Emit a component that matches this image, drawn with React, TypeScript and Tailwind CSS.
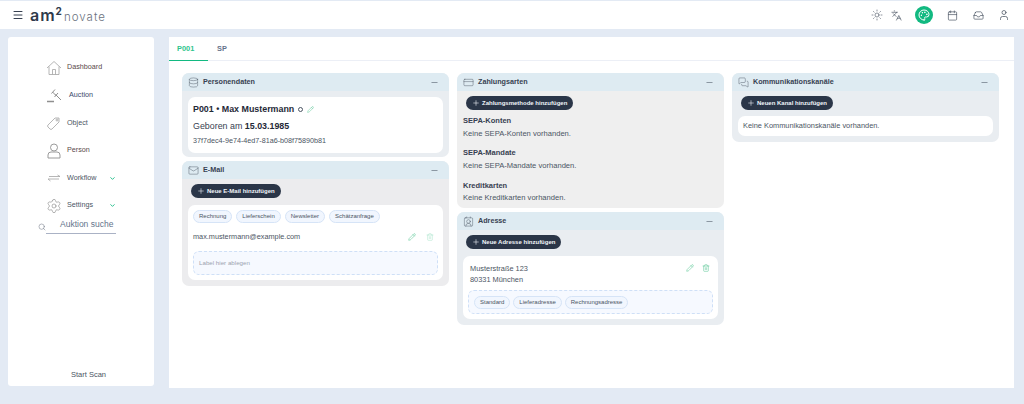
import {
  Calendar,
  ChevronDown,
  ContactRound,
  CreditCard,
  Database,
  Inbox,
  Languages,
  Mail,
  Menu,
  MessagesSquare,
  Minus,
  Palette,
  Pencil,
  Plus,
  Search,
  Settings,
  Sun,
  Trash2,
  User,
} from "lucide-react";
import type { ReactNode } from "react";

function HomeIcon() {
  return (
    <svg viewBox="0 0 16 16" className="h-[16px] w-[16px] text-[#a3a3a3]" fill="none" stroke="currentColor" strokeWidth="0.8">
      <path d="M1 8 8 1.5 15 8M3 6.5V14.5H13V6.5M6.5 14.5V9.5H9.5V14.5" />
    </svg>
  );
}

function GavelIcon() {
  return (
    <svg viewBox="0 0 16 16" className="h-[16px] w-[16px] text-[#8f8f8f]" fill="none" stroke="currentColor" strokeWidth="1">
      <path d="M5.5 6.5 9 2.5M8.5 10 12 6M6.5 5 10.5 9M9.5 7.5 15 13" />
      <path d="M1 14.5H8" strokeWidth="1.5" />
    </svg>
  );
}

function TagIcon() {
  return (
    <svg viewBox="0 0 16 16" className="h-[16px] w-[16px] text-[#a3a3a3]" fill="none" stroke="currentColor" strokeWidth="0.8">
      <path d="M2 10 9 3 H13 V7 L6 14 Q5 15 4 14 L2 12 Q1 11 2 10Z" />
      <circle cx="11" cy="5" r="1" />
    </svg>
  );
}

function PersonIcon() {
  return (
    <svg viewBox="0 0 16 16" className="h-[16px] w-[16px] text-[#8f8f8f]" fill="none" stroke="currentColor" strokeWidth="0.9">
      <circle cx="8" cy="4.5" r="3.5" />
      <path d="M2 15V12Q2 9 5 9H11Q14 9 14 12V15Z" />
    </svg>
  );
}

function WorkflowIcon() {
  return (
    <svg viewBox="0 0 16 16" className="h-[16px] w-[16px] text-[#a3a3a3]" fill="none" stroke="currentColor" strokeWidth="0.8">
      <path d="M3 6.5H14L11.5 5M13 9H2L4.5 11" />
    </svg>
  );
}

function GearIcon() {
  return <Settings className="h-[16px] w-[16px] text-[#8f8f8f]" strokeWidth={1} />;
}

const navItems = [
  { label: "Dashboard", icon: HomeIcon, color: "text-[#5b4a4a]", chevron: false, shift: "" },
  { label: "Auction", icon: GavelIcon, color: "text-[#3b4a6b]", chevron: false, shift: "ml-[2px]" },
  { label: "Object", icon: TagIcon, color: "text-[#4b5563]", chevron: false, shift: "" },
  { label: "Person", icon: PersonIcon, color: "text-[#5b4a4a]", chevron: false, shift: "" },
  { label: "Workflow", icon: WorkflowIcon, color: "text-[#4b5563]", chevron: true, shift: "" },
  { label: "Settings", icon: GearIcon, color: "text-[#4b5563]", chevron: true, shift: "" },
];

function Chip({ label }: { label: string }) {
  return (
    <span className="flex h-[13px] items-center rounded-full border border-[#d6e4f7] bg-[#f1f6fe] px-[5px] text-[6px] text-[#4b5563]">
      {label}
    </span>
  );
}

function AddButton({ label }: { label: string }) {
  return (
    <button className="flex h-[14px] w-fit items-center rounded-full bg-[#2b3648] pl-[6px] pr-[6px] text-[6px] font-semibold text-[#f1f5f9]">
      <Plus className="mr-[2px] h-[8px] w-[8px]" strokeWidth={1.75} />
      {label}
    </button>
  );
}

function Panel({
  title,
  icon,
  bg,
  children,
}: {
  title: string;
  icon: ReactNode;
  bg: string;
  children: ReactNode;
}) {
  return (
    <section className={`overflow-hidden rounded-[7px] ${bg}`}>
      <div className="flex h-[18px] items-center bg-[#deebf2] pl-[6px] pr-[10px]">
        <span className="mr-[4px] text-[#4b5563]">{icon}</span>
        <span className="text-[7.2px] font-bold text-[#374151]">{title}</span>
        <Minus className="ml-auto h-[9px] w-[9px] text-[#4b5563]" strokeWidth={1.5} />
      </div>
      {children}
    </section>
  );
}

export default function App() {
  return (
    <div className="flex h-[404px] w-[1024px] flex-col overflow-hidden bg-[#e3eaf4] font-['Liberation_Sans',Arial,sans-serif]">
      <header className="mt-px flex h-[28px] items-center bg-white pl-[12px] pr-[14px]">
        <Menu className="h-[12px] w-[12px] text-[#374151]" strokeWidth={2} />
        <div className="ml-[6px] flex items-baseline font-['Inter',sans-serif] text-[#2f3a4a]">
          <span className="text-[16px] font-semibold leading-none tracking-[1px]">am</span>
          <span className="relative -top-[6px] text-[10px] font-bold leading-none">2</span>
          <span className="ml-[2px] text-[11.5px] font-light leading-none tracking-[1px] text-[#6b7280]">novate</span>
        </div>
        <div className="ml-auto flex items-center text-[#4b5563]">
          <Sun className="h-[12px] w-[12px]" strokeWidth={1.25} />
          <Languages className="ml-[8px] h-[11px] w-[11px]" strokeWidth={1.5} />
          <span className="ml-[13px] flex h-[18px] w-[18px] items-center justify-center rounded-full bg-[#12b981] text-white">
            <Palette className="h-[12px] w-[12px]" strokeWidth={2} />
          </span>
          <Calendar className="ml-[14px] h-[11px] w-[11px]" strokeWidth={1.5} />
          <Inbox className="ml-[15px] h-[11px] w-[11px]" strokeWidth={1.5} />
          <User className="ml-[14px] h-[12px] w-[12px]" strokeWidth={1.5} />
        </div>
      </header>

      <div className="mt-[8px] flex items-start">
        <aside className="ml-[8px] flex h-[349px] w-[146px] flex-col rounded-[3px] bg-white">
          <nav className="mt-[17px] flex flex-col">
            {navItems.map((item) => (
              <div key={item.label} className="flex h-[27.6px] items-center pl-[38px]">
                <item.icon />
                <span className={`ml-[5px] w-[43px] text-[7.2px] ${item.color}`}>
                  <span className={item.shift}>{item.label}</span>
                </span>
                {item.chevron && <ChevronDown className="-ml-[1px] h-[7px] w-[7px] text-[#12b981]" strokeWidth={3} />}
              </div>
            ))}
          </nav>
          <div className="ml-[30px] mt-[-1px] flex items-end">
            <Search className="mb-[3px] h-[8px] w-[8px] text-[#6b7280]" strokeWidth={1.5} />
            <div className="h-[15px] w-[70px] border-b border-[#aab2c5] pl-[14px] text-[8.5px] leading-[10px] text-[#64748b]">
              Auktion suche
            </div>
          </div>
          <div className="mt-auto mb-[6px] ml-[63px] text-[7.5px] text-[#4b5563]">Start Scan</div>
        </aside>

        <main className="ml-[15px] h-[351px] w-[845px] bg-white">
          <div className="flex h-[24px] border-b border-[#eceff6] text-[7.4px] font-bold">
            <div className="flex h-[24px] w-[39px] items-center border-b border-[#12b981] pl-[8px] pt-[1px] text-[#2fc48d]">P001</div>
            <div className="flex items-center pl-[9px] pt-[1px] text-[#64748b]">SP</div>
          </div>

          <div className="ml-[13px] mt-[12px] flex items-start gap-[8px]">
            <div className="flex w-[267px] flex-col gap-[4px]">
              <Panel title="Personendaten" bg="bg-[#e9edf1]" icon={<Database className="h-[11px] w-[11px]" strokeWidth={1} />}>
                <div className="p-[6px] pb-[4px]">
                  <div className="h-[56px] rounded-[7px] bg-white px-[5px] pt-[6px]">
                    <div className="flex items-center text-[8.9px] font-bold text-[#1f2937]">
                      P001 • Max Mustermann
                      <span className="ml-[4px] h-[5px] w-[5px] rounded-full border border-[#4b5563]" />
                      <Pencil className="ml-[4px] h-[7px] w-[7px] text-[#4fc28f]" strokeWidth={1.5} />
                    </div>
                    <div className="mt-[5px] text-[8.9px] leading-[11px] text-[#374151]">
                      Geboren am <span className="font-bold text-[#1f2937]">15.03.1985</span>
                    </div>
                    <div className="mt-[4px] text-[7.2px] leading-[9px] text-[#4b5563]">37f7dec4-9e74-4ed7-81a6-b08f75890b81</div>
                  </div>
                </div>
              </Panel>

              <Panel title="E-Mail" bg="bg-[#ececee]" icon={<Mail className="h-[11px] w-[11px]" strokeWidth={1} />}>
                <div className="px-[6px] pb-[6px] pt-[5px]">
                  <div className="ml-[3px]">
                    <AddButton label="Neue E-Mail hinzufügen" />
                  </div>
                  <div className="mt-[7px] h-[75px] rounded-[7px] bg-white px-[5px] pt-[5px]">
                    <div className="flex gap-[4px]">
                      {["Rechnung", "Lieferschein", "Newsletter", "Schätzanfrage"].map((c) => (
                        <Chip key={c} label={c} />
                      ))}
                    </div>
                    <div className="mt-[9px] flex h-[10px] items-center text-[7.3px] text-[#4b5563]">
                      max.mustermann@example.com
                      <Pencil className="ml-auto h-[8px] w-[8px] text-[#4fc28f]" strokeWidth={1.5} />
                      <Trash2 className="ml-[10px] mr-[4px] h-[8px] w-[8px] text-[#a7e3c8]" strokeWidth={1.5} />
                    </div>
                    <div className="mt-[9px] flex h-[24px] items-center rounded-[6px] border border-dashed border-[#cfe0f7] bg-[#f6f9ff] pl-[5px] text-[6.2px] text-[#9ca3af]">
                      Label hier ablegen
                    </div>
                  </div>
                </div>
              </Panel>
            </div>

            <div className="flex w-[267px] flex-col gap-[4px]">
              <Panel title="Zahlungsarten" bg="bg-[#efefef]" icon={<CreditCard className="h-[11px] w-[11px]" strokeWidth={1} />}>
                <div className="px-[6px] pb-[5px] pt-[5px]">
                  <div className="ml-[3px]">
                    <AddButton label="Zahlungsmethode hinzufügen" />
                  </div>
                  <div className="mt-[6px] text-[7.5px] font-bold leading-[10px] text-[#374151]">SEPA-Konten</div>
                  <div className="mt-[3px] text-[7.6px] leading-[10px] text-[#4b5563]">Keine SEPA-Konten vorhanden.</div>
                  <div className="mt-[9px] text-[7.5px] font-bold leading-[10px] text-[#374151]">SEPA-Mandate</div>
                  <div className="mt-[3px] text-[7.6px] leading-[10px] text-[#4b5563]">Keine SEPA-Mandate vorhanden.</div>
                  <div className="mt-[10px] text-[7.5px] font-bold leading-[10px] text-[#374151]">Kreditkarten</div>
                  <div className="mt-[2px] text-[7.6px] leading-[10px] text-[#4b5563]">Keine Kreditkarten vorhanden.</div>
                </div>
              </Panel>

              <Panel title="Adresse" bg="bg-[#e9edf1]" icon={<ContactRound className="h-[11px] w-[11px]" strokeWidth={1} />}>
                <div className="px-[6px] pb-[6px] pt-[5px]">
                  <div className="ml-[3px]">
                    <AddButton label="Neue Adresse hinzufügen" />
                  </div>
                  <div className="mt-[7px] h-[63px] rounded-[7px] bg-white px-[5px] pt-[7px]">
                    <div className="flex items-start pl-[2px] text-[7.4px] leading-[11px] text-[#4b5563]">
                      <div>
                        Musterstraße 123
                        <br />
                        80331 München
                      </div>
                      <Pencil className="ml-auto mt-[1px] h-[8px] w-[8px] text-[#4fc28f]" strokeWidth={1.5} />
                      <Trash2 className="ml-[8px] mr-[3px] mt-[1px] h-[8px] w-[8px] text-[#4fc28f]" strokeWidth={1.5} />
                    </div>
                    <div className="mt-[5px] flex h-[24px] items-center gap-[3px] rounded-[6px] border border-dashed border-[#cfe0f7] bg-[#f6f9ff] pl-[5px]">
                      {["Standard", "Lieferadresse", "Rechnungsadresse"].map((c) => (
                        <Chip key={c} label={c} />
                      ))}
                    </div>
                  </div>
                </div>
              </Panel>
            </div>

            <div className="flex w-[267px] flex-col">
              <Panel title="Kommunikationskanäle" bg="bg-[#e9edf1]" icon={<MessagesSquare className="h-[11px] w-[11px]" strokeWidth={1} />}>
                <div className="px-[6px] pb-[6px] pt-[5px]">
                  <div className="ml-[3px]">
                    <AddButton label="Neuen Kanal hinzufügen" />
                  </div>
                  <div className="mt-[6px] flex h-[20px] items-center rounded-[7px] bg-white pl-[5px] text-[7.4px] text-[#4b5563]">
                    Keine Kommunikationskanäle vorhanden.
                  </div>
                </div>
              </Panel>
            </div>
          </div>
        </main>
      </div>
    </div>
  );
}
